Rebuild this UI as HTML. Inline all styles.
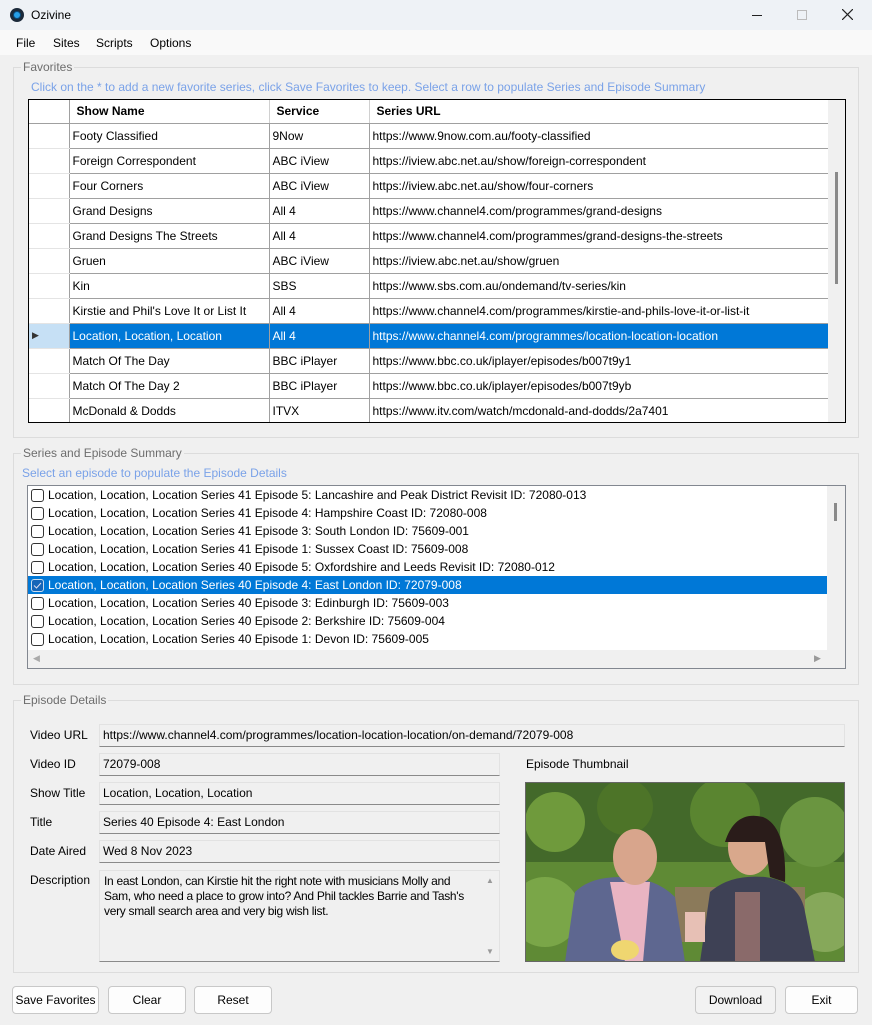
<!DOCTYPE html>
<html><head><meta charset="utf-8"><style>
*{box-sizing:border-box;margin:0;padding:0}
body{width:872px;height:1025px;background:#f0f0f0;font-family:"Liberation Sans",sans-serif;font-size:12px;color:#000;position:relative;overflow:hidden}
.a{position:absolute}
.grp{position:absolute;border:1px solid #dcdcdc}
.gl{position:absolute;background:#f0f0f0;color:#6d6d6d;padding:0 2px;font-size:12px;top:-8px;left:7px}
.hint{position:absolute;color:#7aa2e8;font-size:12px}
table{border-collapse:collapse}
td{height:25px;border:1px solid #a0a0a0;padding:0 3px;white-space:nowrap;overflow:hidden;background:#fff}
td.rh{border-left:none;border-top:1px solid #e4e4e4;border-bottom:1px solid #e4e4e4;border-right:1px solid #a0a0a0}
tr.sel td{background:#0078d7;color:#fff}
tr.sel td.rh{background:#c6e0f5}
th{height:23px;text-align:left;padding:0 7px;font-weight:bold;background:#fff;border-right:1px solid #d0d0d0;border-bottom:1px solid #a0a0a0}
.li{height:18px;line-height:18px;padding-left:20px;position:relative;white-space:nowrap}
.li:before{content:"";box-sizing:border-box;position:absolute;left:3px;top:3px;width:13px;height:13px;border:1px solid #333;border-radius:3px;background:#fff}
.li.s{background:#0078d7;color:#fff}
.li.s:before{background:#1565b8;border-color:#cde}
.lbl{position:absolute;left:30px}
.fld{position:absolute;background:#f0f0f0;border:1px solid #e2e2e2;border-bottom:1px solid #8a8a8a;padding-left:3px;line-height:20px}
.btn{position:absolute;top:986px;height:28px;border:1px solid #c8c8c8;border-radius:4px;background:#fdfdfd;text-align:center;line-height:26px}
</style></head><body>
<div class="a" style="left:0;top:0;width:872px;height:30px;background:#eef2f6"></div>
<div class="a" style="left:10px;top:8px;width:14px;height:14px;border-radius:50%;background:#1b2a3a"></div>
<div class="a" style="left:13px;top:11px;width:8px;height:8px;border-radius:50%;background:#27a0e8;border:1px solid #0b4a7a"></div>
<div class="a" style="left:31px;top:8px;font-size:12px">Ozivine</div>
<div class="a" style="left:752px;top:15px;width:10px;height:1px;background:#222"></div>
<div class="a" style="left:797px;top:10px;width:10px;height:10px;border:1px solid #bbb"></div>
<svg class="a" style="left:842px;top:9px" width="11" height="11"><path d="M0 0L11 11M11 0L0 11" stroke="#222" stroke-width="1.2"/></svg>
<div class="a" style="left:0;top:30px;width:872px;height:25px;background:#f9f9f9"></div>
<div class="a" style="left:16px;top:36px">File</div>
<div class="a" style="left:53px;top:36px">Sites</div>
<div class="a" style="left:96px;top:36px">Scripts</div>
<div class="a" style="left:150px;top:36px">Options</div>

<div class="grp" style="left:13px;top:67px;width:846px;height:371px"><div class="gl">Favorites</div></div>
<div class="hint" style="left:31px;top:80px">Click on the * to add a new favorite series, click Save Favorites to keep. Select a row to populate Series and Episode Summary</div>
<div class="a" style="left:28px;top:99px;width:818px;height:324px;border:1px solid #000;background:#fff;overflow:hidden">
<table style="width:799px;table-layout:fixed">
<colgroup><col style="width:40px"><col style="width:200px"><col style="width:100px"><col style="width:459px"></colgroup>
<tr><th style="border-right:1px solid #a0a0a0"></th><th>Show Name</th><th>Service</th><th>Series URL</th></tr>
<tr><td class="rh"></td><td>Footy Classified</td><td>9Now</td><td>https://www.9now.com.au/footy-classified</td></tr>
<tr><td class="rh"></td><td>Foreign Correspondent</td><td>ABC iView</td><td>https://iview.abc.net.au/show/foreign-correspondent</td></tr>
<tr><td class="rh"></td><td>Four Corners</td><td>ABC iView</td><td>https://iview.abc.net.au/show/four-corners</td></tr>
<tr><td class="rh"></td><td>Grand Designs</td><td>All 4</td><td>https://www.channel4.com/programmes/grand-designs</td></tr>
<tr><td class="rh"></td><td>Grand Designs The Streets</td><td>All 4</td><td>https://www.channel4.com/programmes/grand-designs-the-streets</td></tr>
<tr><td class="rh"></td><td>Gruen</td><td>ABC iView</td><td>https://iview.abc.net.au/show/gruen</td></tr>
<tr><td class="rh"></td><td>Kin</td><td>SBS</td><td>https://www.sbs.com.au/ondemand/tv-series/kin</td></tr>
<tr><td class="rh"></td><td>Kirstie and Phil's Love It or List It</td><td>All 4</td><td>https://www.channel4.com/programmes/kirstie-and-phils-love-it-or-list-it</td></tr>
<tr class="sel"><td class="rh" style="color:#333;font-size:9px">▶</td><td>Location, Location, Location</td><td>All 4</td><td>https://www.channel4.com/programmes/location-location-location</td></tr>
<tr><td class="rh"></td><td>Match Of The Day</td><td>BBC iPlayer</td><td>https://www.bbc.co.uk/iplayer/episodes/b007t9y1</td></tr>
<tr><td class="rh"></td><td>Match Of The Day 2</td><td>BBC iPlayer</td><td>https://www.bbc.co.uk/iplayer/episodes/b007t9yb</td></tr>
<tr><td class="rh"></td><td>McDonald &amp; Dodds</td><td>ITVX</td><td>https://www.itv.com/watch/mcdonald-and-dodds/2a7401</td></tr>
</table>
<div class="a" style="left:799px;top:0;width:17px;height:322px;background:#f0f0f0"></div>
<div class="a" style="left:806px;top:72px;width:3px;height:112px;background:#8a8a8a"></div>
</div>

<div class="grp" style="left:13px;top:453px;width:846px;height:232px"><div class="gl">Series and Episode Summary</div></div>
<div class="hint" style="left:22px;top:466px">Select an episode to populate the Episode Details</div>
<div class="a" style="left:27px;top:485px;width:819px;height:184px;border:1px solid #828790;background:#fff;overflow:hidden">
<div style="width:800px;padding-top:0">
<div class="li">Location, Location, Location Series 41 Episode 5: Lancashire and Peak District Revisit ID: 72080-013</div>
<div class="li">Location, Location, Location Series 41 Episode 4: Hampshire Coast ID: 72080-008</div>
<div class="li">Location, Location, Location Series 41 Episode 3: South London ID: 75609-001</div>
<div class="li">Location, Location, Location Series 41 Episode 1: Sussex Coast ID: 75609-008</div>
<div class="li">Location, Location, Location Series 40 Episode 5: Oxfordshire and Leeds Revisit ID: 72080-012</div>
<div class="li s">Location, Location, Location Series 40 Episode 4: East London ID: 72079-008<svg style="position:absolute;left:5px;top:6px" width="9" height="7"><path d="M1 3.5L3.5 6L8 1" stroke="#dde" fill="none" stroke-width="1"/></svg></div>
<div class="li">Location, Location, Location Series 40 Episode 3: Edinburgh ID: 75609-003</div>
<div class="li">Location, Location, Location Series 40 Episode 2: Berkshire ID: 75609-004</div>
<div class="li">Location, Location, Location Series 40 Episode 1: Devon ID: 75609-005</div>
</div>
<div class="a" style="left:799px;top:0;width:18px;height:182px;background:#f0f0f0"></div>
<div class="a" style="left:806px;top:17px;width:3px;height:18px;background:#8a8a8a"></div>
<div class="a" style="left:0;top:164px;width:817px;height:18px;background:#f0f0f0"></div>
<div class="a" style="left:5px;top:167px;color:#aaa;font-size:9px">◀</div>
<div class="a" style="left:786px;top:167px;color:#999;font-size:9px">▶</div>
</div>

<div class="grp" style="left:13px;top:700px;width:846px;height:273px"><div class="gl">Episode Details</div></div>
<div class="lbl" style="top:728px">Video URL</div>
<div class="fld" style="left:99px;top:724px;width:746px;height:23px">https://www.channel4.com/programmes/location-location-location/on-demand/72079-008</div>
<div class="lbl" style="top:757px">Video ID</div>
<div class="fld" style="left:99px;top:753px;width:401px;height:23px">72079-008</div>
<div class="lbl" style="top:786px">Show Title</div>
<div class="fld" style="left:99px;top:782px;width:401px;height:23px">Location, Location, Location</div>
<div class="lbl" style="top:815px">Title</div>
<div class="fld" style="left:99px;top:811px;width:401px;height:23px">Series 40 Episode 4: East London</div>
<div class="lbl" style="top:844px">Date Aired</div>
<div class="fld" style="left:99px;top:840px;width:401px;height:23px">Wed 8 Nov 2023</div>
<div class="lbl" style="top:873px">Description</div>
<div class="fld" style="left:99px;top:870px;width:401px;height:92px;line-height:15px;padding:3px 0 0 4px;white-space:nowrap;letter-spacing:-0.3px;overflow:hidden">In east London, can Kirstie hit the right note with musicians Molly and<br>Sam, who need a place to grow into? And Phil tackles Barrie and Tash's<br>very small search area and very big wish list.</div>
<div class="a" style="left:486px;top:876px;color:#999;font-size:8px">▲</div>
<div class="a" style="left:486px;top:947px;color:#999;font-size:8px">▼</div>
<div class="a" style="left:526px;top:757px">Episode Thumbnail</div>
<svg class="a" style="left:525px;top:782px" width="320" height="180" viewBox="0 0 320 180">
<rect width="320" height="180" fill="#5f8a35"/>
<rect y="0" width="320" height="80" fill="#43692a"/>
<circle cx="30" cy="40" r="30" fill="#6f9a3c"/><circle cx="100" cy="25" r="28" fill="#4d7428"/><circle cx="200" cy="30" r="35" fill="#5a8530"/><circle cx="290" cy="50" r="35" fill="#6a9540"/><circle cx="20" cy="130" r="35" fill="#7aa648"/><circle cx="300" cy="140" r="30" fill="#86a85a"/>
<rect x="150" y="105" width="130" height="55" fill="#8b7a5a"/>
<path d="M40 180 L50 110 Q65 95 95 95 Q130 95 150 115 L160 180Z" fill="#5e6790"/>
<path d="M85 100 L100 180 L118 180 L125 100Z" fill="#e9b4c2"/>
<ellipse cx="110" cy="75" rx="22" ry="28" fill="#d8a58c"/>
<path d="M175 180 L185 110 Q205 92 240 95 Q275 100 280 130 L290 180Z" fill="#3e4155"/>
<ellipse cx="225" cy="65" rx="22" ry="28" fill="#d9a88c"/>
<path d="M200 60 Q210 28 238 35 Q262 45 260 100 L245 95 L240 60 Z" fill="#2a1c1a"/>
<rect x="210" y="110" width="25" height="70" fill="#8a6a6a"/>
<ellipse cx="100" cy="168" rx="14" ry="10" fill="#efd670"/>
<rect x="160" y="130" width="20" height="30" fill="#e7c0b5"/>
<rect x="0.5" y="0.5" width="319" height="179" fill="none" stroke="#666" stroke-width="1"/>
</svg>

<div class="btn" style="left:12px;width:87px">Save Favorites</div>
<div class="btn" style="left:108px;width:78px">Clear</div>
<div class="btn" style="left:194px;width:78px">Reset</div>
<div class="btn" style="left:695px;width:81px;background:#f2f2f2">Download</div>
<div class="btn" style="left:785px;width:73px">Exit</div>
</body></html>
